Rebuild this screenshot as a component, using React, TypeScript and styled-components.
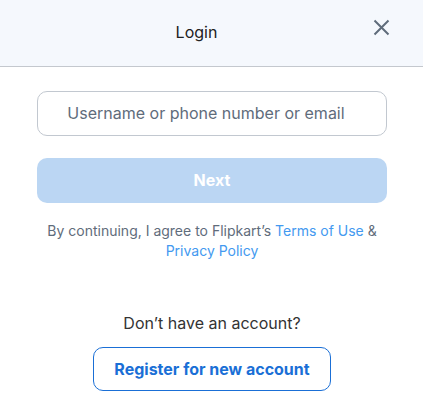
import React from "react";
import styled, { createGlobalStyle } from "styled-components";

const Global = createGlobalStyle`
  html, body { margin: 0; padding: 0; background: #fff; }
  body { font-family: Inter, "Noto Sans", sans-serif; }
  * { box-sizing: border-box; }
`;

const Modal = styled.div`
  width: 423px;
  height: 404px;
  background: #fff;
  display: flex;
  flex-direction: column;
`;

const Header = styled.header`
  position: relative;
  height: 67px;
  background: #f5f8fd;
  border-bottom: 1px solid #c4c8ce;
  display: flex;
  align-items: center;
  justify-content: center;
`;

const Title = styled.h1`
  margin: 0 0 2px 0;
  font-size: 16px;
  font-weight: 400;
  color: #212121;
  padding-right: 30px;
`;

const Close = styled.button`
  position: absolute;
  right: 31px;
  top: 17px;
  width: 21px;
  height: 21px;
  padding: 0;
  border: none;
  background: transparent;
  display: flex;
  align-items: center;
  justify-content: center;
  cursor: pointer;
`;

const Body = styled.div`
  display: flex;
  flex-direction: column;
  align-items: center;
  padding: 24px 36px 0 37px;
`;

const Input = styled.input`
  width: 350px;
  height: 45px;
  border: 1px solid #c2c8d0;
  border-radius: 10px;
  font-family: Inter, sans-serif;
  font-size: 16px;
  text-align: center;
  padding: 0 12px 2px 0;
  color: #212121;
  outline: none;
  &::placeholder { color: #5f6c7b; }
`;

const Primary = styled.button`
  margin-top: 22px;
  width: 350px;
  height: 45px;
  border: none;
  border-radius: 10px;
  background: #bbd6f3;
  color: #fff;
  font-family: Inter, sans-serif;
  font-size: 16px;
  font-weight: 700;
  padding: 0 0 1px 0;
`;

const Terms = styled.p`
  margin: 18px 0 0 0;
  width: 360px;
  text-align: center;
  font-size: 14px;
  line-height: 20px;
  color: #5f6c7b;
`;

const Link = styled.a`
  color: #4399f0;
  text-decoration: none;
`;

const Prompt = styled.p`
  margin: 52px 0 0 0;
  font-size: 16px;
  line-height: 20px;
  color: #333;
`;

const Secondary = styled.button`
  margin-top: 14px;
  width: 238px;
  height: 44px;
  border: 1px solid #1a6fd6;
  border-radius: 10px;
  background: #fff;
  color: #1a6fd6;
  font-family: Inter, sans-serif;
  font-size: 16px;
  font-weight: 700;
  padding: 0 0 1px 0;
`;

export default function App() {
  return (
    <>
      <Global />
      <Modal>
        <Header>
          <Title>Login</Title>
          <Close aria-label="Close">
            <svg width="17" height="17" viewBox="0 0 17 17">
              <path d="M1.5 1.5 L15.5 15.5 M15.5 1.5 L1.5 15.5" stroke="#5f6c7b" strokeWidth="2" strokeLinecap="butt" />
            </svg>
          </Close>
        </Header>
        <Body>
          <Input placeholder="Username or phone number or email" />
          <Primary>Next</Primary>
          <Terms>
            By continuing, I agree to Flipkart’s <Link>Terms of Use</Link> &amp;{" "}
            <Link>Privacy Policy</Link>
          </Terms>
          <Prompt>Don’t have an account?</Prompt>
          <Secondary>Register for new account</Secondary>
        </Body>
      </Modal>
    </>
  );
}
